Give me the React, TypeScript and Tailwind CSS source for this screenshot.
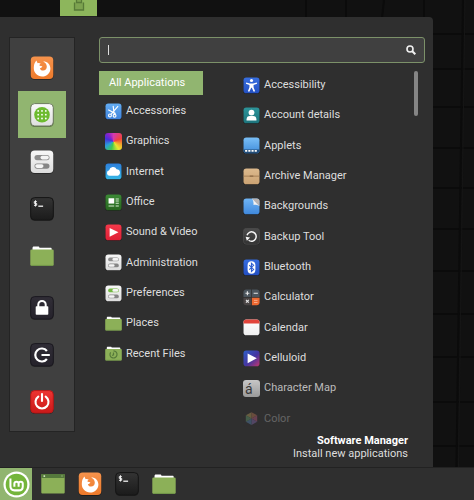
import type { ReactNode } from 'react';

interface IconProps {
  className?: string;
}

interface AppEntry {
  label: string;
  icon: ReactNode;
  className?: string;
}

interface TileProps extends IconProps {
  from: string;
  to: string;
  id: string;
  stroke?: string;
  children?: ReactNode;
}

// Rounded square with a vertical gradient, shared by most of the icons
function Tile({ from, to, id, stroke = 'none', className = 'size-[17px]', children }: TileProps) {
  return (
    <svg className={`shrink-0 ${className}`} viewBox="0 0 24 24" aria-hidden="true">
      <defs>
        <linearGradient id={id} x1="0" y1="0" x2="0" y2="1">
          <stop offset="0" stopColor={from} />
          <stop offset="1" stopColor={to} />
        </linearGradient>
      </defs>
      <rect x="0.2" y="1" width="23.6" height="23" rx="4.5" fill="#000" opacity="0.35" />
      <rect x="0.7" y="0.6" width="22.6" height="22.4" rx="4" fill={`url(#${id})`} stroke={stroke} />
      {children}
    </svg>
  );
}

function FirefoxIcon({ id, className = 'size-6' }: IconProps & { id: string }) {
  return (
    <Tile id={id} from="#f6934c" to="#ee7a2b" className={className}>
      <path
        d="M4 9.500C4.300 7.500 5.200 5.800 6.600 4.500c.1 1.200.5 2 1.200 2.700 1-.2 2 0 2.900.4-.8.5-1.300 1.200-1.300 2 .8.5 1.700.6 2.900.6-.1 1.200-1.200 1.500-2.400 2 .4 1.600 1.700 2.400 3.200 2.300 2.200-.1 3.700-1.700 3.700-3.800 0-2.600-1.500-4-3.600-5.500 4.300.2 7.200 3.200 7.200 7.200 0 4.500-3.700 8.100-8.300 8.100S3.800 16.900 3.800 12.300c0-1 .1-1.900.2-2.800z"
        fill="#fff"
      />
    </Tile>
  );
}

function MenuGridIcon() {
  const steps = [-3.8, 0, 3.8];
  return (
    <Tile id="software" from="#fafafa" to="#dedede" stroke="#6c7b5c" className="size-6">
      <circle cx="12" cy="11.7" r="7.8" fill="#6dbb2f" />
      {steps.map((y) =>
        steps.map((x) => <circle key={`${x}${y}`} cx={12 + x} cy={11.7 + y} r="0.9" fill="#fff" />)
      )}
    </Tile>
  );
}

function TogglesIcon({ id, top = '#8d8d8d', className = 'size-[17px]' }: IconProps & { id: string; top?: string }) {
  return (
    <Tile id={id} from="#f8f8f8" to="#dcdcdc" className={className}>
      <rect x="4.5" y="5" width="15" height="5.2" rx="2.6" fill={top} />
      <rect x="10.5" y="5.8" width="8.3" height="3.6" rx="1.8" fill="#f5f5f5" />
      <rect x="4.5" y="13.5" width="15" height="5.2" rx="2.6" fill="#858585" />
      <rect x="5.2" y="14.3" width="8.3" height="3.6" rx="1.8" fill="#f5f5f5" />
    </Tile>
  );
}

function TerminalIcon({ id }: { id: string }) {
  return (
    <Tile id={id} from="#343434" to="#1b1b1b" stroke="#161616" className="size-6">
      <path d="M6.8 4.600H4.300v1.800h2.400v1.900H4M5.500 3.300v6.200" fill="none" stroke="#f2f2f2" />
      <path d="M8.300 9.200h4.800" stroke="#f2f2f2" strokeWidth="1.3" />
    </Tile>
  );
}

function FolderIcon({ className = 'size-6', recent = false }: IconProps & { recent?: boolean }) {
  return (
    <svg className={`shrink-0 ${className}`} viewBox="0 0 24 24" aria-hidden="true">
      <path d="M2.500 6V4.200c0-1 .5-1.700 1.400-1.700h4.200c.9 0 1.200.5 1.400 1.200h11c.8 0 1.200.5 1.200 1.300v2z" fill="#fff" />
      <rect x="0.3" y="5.5" width="23.4" height="16.3" rx="1.3" fill="#8cb058" />
      <path d="M1 21.400h22" stroke="#73984a" />
      {recent && (
        <g fill="none" stroke="#55793a" strokeWidth="1.7">
          <path d="M8 10.300a5 5 0 1 0 4-2" />
          <path d="M12 10.500v3.300l-2 1" />
        </g>
      )}
    </svg>
  );
}

function WindowIcon() {
  return (
    <svg className="size-6" viewBox="0 0 24 24" aria-hidden="true">
      <rect x="0.3" y="2" width="23.4" height="19.5" rx="1" fill="#8cb058" />
      <path d="M0.300 6V3c0-.6.4-1 1-1h21.400c.6 0 1 .4 1 1v3z" fill="#55793c" />
      <rect x="2.5" y="3.3" width="1.6" height="1.6" fill="#d9e8c7" />
      <path d="M20 4h2" stroke="#86a86a" />
    </svg>
  );
}

function MintLogo() {
  return (
    <svg className="size-[27px]" viewBox="0 0 28 28" aria-hidden="true">
      <circle cx="14" cy="14" r="13.5" fill="#fff" />
      <circle cx="14" cy="14" r="11.2" fill="#74b53b" />
      <path
        d="M7.700 7.800v8.100c0 2.600 1.800 4.200 4.200 4.200h4.400c2.400 0 4.200-1.600 4.200-4.100v-2.700c0-1.300-.9-2.200-2.100-2.200s-2.200.9-2.200 2.200v3M16.200 13.300c0-1.300-.9-2.200-2.200-2.200s-2.200.9-2.200 2.200v3"
        fill="none"
        stroke="#fff"
        strokeWidth="2.1"
      />
    </svg>
  );
}

function LockIcon() {
  return (
    <Tile id="lock" from="#302d36" to="#25222b" stroke="#1b1920" className="size-6">
      <path d="M8.300 11V8.600a3.700 3.700 0 0 1 7.400 0V11" fill="none" stroke="#fff" strokeWidth="2" />
      <rect x="5.7" y="10.3" width="12.6" height="8.4" rx="0.8" fill="#fff" />
    </Tile>
  );
}

function LogoutIcon() {
  return (
    <Tile id="logout" from="#302d36" to="#25222b" stroke="#1b1920" className="size-6">
      <path d="M16.900 8a6.500 6.500 0 1 0 0 8M11.500 12h8.300" fill="none" stroke="#fff" strokeWidth="2.2" />
    </Tile>
  );
}

function PowerIcon() {
  return (
    <Tile id="power" from="#ee3432" to="#c91919" stroke="#b81818" className="size-6">
      <path
        d="M8.300 6.600a6.500 6.500 0 1 0 7.400 0M12 4v7"
        fill="none"
        stroke="#fff"
        strokeWidth="2.1"
        strokeLinecap="round"
      />
    </Tile>
  );
}

const favorites: AppEntry[] = [
  { label: 'Firefox', icon: <FirefoxIcon id="fx-side" /> },
  { label: 'Software Manager', icon: <MenuGridIcon />, className: 'bg-[#91b570]' },
  { label: 'System Settings', icon: <TogglesIcon id="settings" className="size-6" /> },
  { label: 'Terminal', icon: <TerminalIcon id="term-side" /> },
  { label: 'Files', icon: <FolderIcon /> },
];

const session: AppEntry[] = [
  { label: 'Lock Screen', icon: <LockIcon /> },
  { label: 'Logout', icon: <LogoutIcon /> },
  { label: 'Quit', icon: <PowerIcon /> },
];

const categories: AppEntry[] = [
  {
    label: 'Accessories',
    icon: (
      <Tile id="accessories" from="#64adf3" to="#3f83dc">
        <g fill="none" stroke="#fff" strokeWidth="1.6">
          <path d="M4.500 9.500l10.500 5.500M11.500 4l1.500 12M18.500 4.500L8.500 16" />
          <circle cx="7" cy="17.5" r="2" />
          <circle cx="13.5" cy="18" r="2" />
        </g>
      </Tile>
    ),
  },
  {
    label: 'Graphics',
    icon: (
      <span className="size-[17px] shrink-0 rounded-[3px] bg-[conic-gradient(from_0deg,#d43bb0,#f0433c_70deg,#f2a32c_110deg,#e8e82e_145deg,#3fc94e_195deg,#2b9fd8_240deg,#4530d8_290deg,#8a22cc_325deg,#d43bb0)]" />
    ),
  },
  {
    label: 'Internet',
    icon: (
      <Tile id="internet" from="#2e7fdb" to="#35b6e6">
        <path d="M6.500 18a4 4 0 0 1-.6-7.900 5.600 5.600 0 0 1 10.500-1.300 4.700 4.700 0 0 1 1.400 9.200z" fill="#fff" />
      </Tile>
    ),
  },
  {
    label: 'Office',
    icon: (
      <Tile id="office" from="#3c8a36" to="#27661f">
        <rect x="5" y="6" width="8" height="7.5" fill="#fff" />
        <path d="M15 7h4.500M15 10h4.500M15 13h4.500M5 17h8M15 17h4.500" stroke="#d5ecd0" strokeWidth="1.5" />
      </Tile>
    ),
  },
  {
    label: 'Sound & Video',
    icon: (
      <Tile id="sound" from="#f4394a" to="#df2036">
        <path d="M6.500 5.500l12.500 6.300-12.500 6.300z" fill="#fff" />
      </Tile>
    ),
  },
  { label: 'Administration', icon: <TogglesIcon id="administration" /> },
  { label: 'Preferences', icon: <TogglesIcon id="preferences" top="#74b843" /> },
  { label: 'Places', icon: <FolderIcon className="size-[17px]" /> },
  { label: 'Recent Files', icon: <FolderIcon className="size-[17px]" recent /> },
];

const applications: AppEntry[] = [
  {
    label: 'Accessibility',
    icon: (
      <Tile id="accessibility" from="#386fe0" to="#2451c2">
        <circle cx="12" cy="5" r="2.2" fill="#fff" />
        <path
          d="M4.500 7.700l5.200 1.300h4.600l5.200-1.300.4 1.800-5 1.700v3.300l2.200 5.700-2 .7-2.700-5.600h-.8l-2.700 5.600-2-.7 2.200-5.700v-3.300l-5-1.700z"
          fill="#fff"
        />
      </Tile>
    ),
  },
  {
    label: 'Account details',
    icon: (
      <Tile id="account" from="#2d959a" to="#1d747c">
        <circle cx="12" cy="7.9" r="4.1" fill="#fff" />
        <path d="M5 19v-1.500c0-3 2-4.700 4.500-4.700h5c2.500 0 4.500 1.700 4.500 4.700V19z" fill="#fff" />
      </Tile>
    ),
  },
  {
    label: 'Applets',
    icon: (
      <Tile id="applets" from="#7abff7" to="#3e8bda">
        <path d="M.7 17.500h22.600V19a4 4 0 0 1-4 4H4.700a4 4 0 0 1-4-4z" fill="#234e7a" />
        <path d="M3 19.500h18" stroke="#fff" strokeWidth="2.6" strokeDasharray="3 1.5" />
      </Tile>
    ),
  },
  {
    label: 'Archive Manager',
    icon: (
      <Tile id="archive" from="#dcb98d" to="#cba373">
        <path d="M1 11.500h22" stroke="#a68056" strokeWidth="1.4" />
        <path d="M9.500 11.500h5" stroke="#8e6b46" strokeWidth="1.8" />
      </Tile>
    ),
  },
  {
    label: 'Backgrounds',
    icon: (
      <Tile id="backgrounds" from="#70b5f5" to="#3f88dc">
        <path d="M12.500.6h6.800a4 4 0 0 1 4 4v7.200z" fill="#b9b3b1" />
        <path d="M12.500.6l10.800 11.200c-3-1.800-5.500-2.400-8.500-2 .5-3-.2-6.200-2.300-9.200z" fill="#f7f3f1" />
      </Tile>
    ),
  },
  {
    label: 'Backup Tool',
    icon: (
      <Tile id="backup" from="#4b4b4b" to="#333333" stroke="#515151">
        <path d="M8 17.300a6.600 6.600 0 1 0-2.300-7" fill="none" stroke="#f5f5f5" strokeWidth="2.1" />
        <path d="M3.700 12.500l6.300 1-4.500 4.500z" fill="#f5f5f5" />
      </Tile>
    ),
  },
  {
    label: 'Bluetooth',
    icon: (
      <Tile id="bluetooth" from="#366de0" to="#234fc2">
        <rect x="6.5" y="3" width="11" height="17.8" rx="5.5" fill="#fff" />
        <path d="M8.800 8.700l6.200 6-3.100 3V5.900l3.100 3-6.200 6" fill="none" stroke="#2c5dd0" strokeWidth="1.5" />
      </Tile>
    ),
  },
  {
    label: 'Calculator',
    icon: (
      <svg className="size-[17px] shrink-0" viewBox="0 0 24 24" aria-hidden="true">
        <path d="M4.500.6h7v10.700H.6V4.600c0-2.200 1.700-4 3.900-4z" fill="#4b555d" />
        <path d="M12.500.6h7c2.200 0 3.900 1.800 3.900 4v6.700H12.500z" fill="#4b555d" />
        <path d="M.6 12.300h10.900V23h-7a3.900 3.900 0 0 1-3.900-3.900z" fill="#4a4545" />
        <path d="M12.500 12.300h10.900v6.800c0 2.200-1.700 3.900-3.900 3.900h-7z" fill="#ed6931" />
        <path
          d="M3.500 6h5.500M6.200 3.300v5.500M15 6h6M4.200 15.300l4 4M8.200 15.300l-4 4"
          stroke="#e8e8e8"
          strokeWidth="1.6"
        />
        <path d="M15.500 16h5M15.500 19h5" stroke="#f8b695" strokeWidth="1.3" />
      </svg>
    ),
  },
  {
    label: 'Calendar',
    icon: (
      <Tile id="calendar" from="#ffffff" to="#efefef">
        <path d="M.7 6.500V4.600a4 4 0 0 1 4-4h14.600a4 4 0 0 1 4 4v1.900z" fill="#e2443b" />
      </Tile>
    ),
  },
  {
    label: 'Celluloid',
    icon: (
      <svg className="size-[17px] shrink-0" viewBox="0 0 24 24" aria-hidden="true">
        <defs>
          <linearGradient id="celluloid" x1="0" y1="0" x2="1" y2="1">
            <stop offset="0" stopColor="#2f60c8" />
            <stop offset="0.55" stopColor="#4435a0" />
            <stop offset="1" stopColor="#c3366f" />
          </linearGradient>
        </defs>
        <rect x="0.7" y="0.6" width="22.6" height="22.4" rx="4" fill="url(#celluloid)" />
        <path d="M6.500 5l13 6.800-13 6.800z" fill="#fff" />
      </svg>
    ),
  },
  {
    label: 'Character Map',
    className: 'opacity-80',
    icon: (
      <span className="flex size-[17px] shrink-0 items-end rounded-[3px] bg-linear-to-b from-[#ededed] to-[#b5b5b5] pl-0.5 text-sm leading-4 text-[#3b3b3b]">
        á
      </span>
    ),
  },
  {
    label: 'Color',
    className: 'opacity-30',
    icon: (
      <svg className="size-[17px] shrink-0" viewBox="0 0 24 24" aria-hidden="true">
        <rect x="0.7" y="0.6" width="22.6" height="22.4" rx="4" fill="#302c32" />
        <path d="M12 3v9L4 7.500z" fill="#e8c86a" />
        <path d="M12 3v9l8-4.500z" fill="#f0905f" />
        <path d="M20 7.500v9L12 12z" fill="#ee6a9e" />
        <path d="M20 16.500L12 21v-9z" fill="#a57be0" />
        <path d="M12 21l-8-4.500 8-4.500z" fill="#639fe0" />
        <path d="M4 16.500v-9l8 4.500z" fill="#7ac487" />
      </svg>
    ),
  },
];

const taskbar: AppEntry[] = [
  { label: 'Show Desktop', icon: <WindowIcon /> },
  { label: 'Firefox', icon: <FirefoxIcon id="fx-bar" /> },
  { label: 'Terminal', icon: <TerminalIcon id="term-bar" /> },
  { label: 'Files', icon: <FolderIcon /> },
];

// Stone block wallpaper
function Wallpaper() {
  const seams = [34, 69, 107, 148, 188, 229, 271, 314, 357, 402, 446];
  return (
    <svg
      className="absolute inset-0 h-full w-full"
      viewBox="0 0 474 500"
      preserveAspectRatio="xMaxYMin slice"
      aria-hidden="true"
    >
      <rect width="474" height="500" fill="#111" />
      <g stroke="#0b0b0b" strokeWidth="2">
        {seams.map((y) => (
          <path key={y} d={`M424 ${y}h50`} />
        ))}
        <path d="M463 0L456 500M306 0v18M346 0v18M384 0l-2 18M424 0v18" />
      </g>
      <path d="M465 0L458 500" stroke="#161616" />
    </svg>
  );
}

function SideButton({ item }: { item: AppEntry }) {
  return (
    <button
      type="button"
      aria-label={item.label}
      className={`flex h-[47px] w-12 items-center justify-center ${item.className ?? ''}`}
    >
      {item.icon}
    </button>
  );
}

function EntryList({ items, className }: { items: AppEntry[]; className: string }) {
  return (
    <ul className={`grid auto-rows-fr ${className}`}>
      {items.map((item) => (
        <li key={item.label} className={`flex ${item.className ?? ''}`}>
          <button type="button" className="flex flex-1 items-center gap-1 text-left whitespace-nowrap">
            {item.icon}
            {item.label}
          </button>
        </li>
      ))}
    </ul>
  );
}

export default function App() {
  return (
    <div className="relative flex min-h-screen flex-col bg-[#111] font-[Roboto,'Noto_Sans',sans-serif] text-[11px] text-[#dedede]">
      <Wallpaper />

      <div className="relative ml-[60px] flex h-[17px] w-[37px] items-start justify-center border-b border-[#222] bg-[#8db65c]">
        <svg className="h-[11px] w-3" viewBox="0 0 12 11" aria-hidden="true">
          <path d="M1.500 2.500v7.500h9V2.500M3.500 0v2.500h5V0" fill="#7da350" stroke="#577a37" strokeWidth="1.3" />
        </svg>
      </div>

      {/* Application menu */}
      <main className="relative mr-[41px] flex flex-1 gap-6 rounded-tr-sm bg-[#2f2f2f] pt-5 pr-2 pl-[9px]">
        <nav className="mb-[35px] flex flex-col justify-between border border-[#242424] bg-[#404040] px-2 py-1.5">
          <div>
            {favorites.map((item) => (
              <SideButton key={item.label} item={item} />
            ))}
          </div>
          <div>
            {session.map((item) => (
              <SideButton key={item.label} item={item} />
            ))}
          </div>
        </nav>

        <section className="flex min-w-0 flex-1 flex-col">
          <label className="flex h-[26px] items-center rounded-[3px] border border-[#7c9169] bg-[#404040] px-2">
            <span className="h-2.5 w-px bg-[#dedede]" />
            <input
              type="text"
              aria-label="Search"
              className="min-w-0 flex-1 bg-transparent text-[11px] caret-[#dedede] outline-none"
            />
            <svg className="size-2.5" viewBox="0 0 10 10" aria-hidden="true">
              <circle cx="4" cy="4" r="3" fill="none" stroke="#f0f0f0" strokeWidth="1.6" />
              <path d="M6.300 6.300L9.300 9.300" stroke="#f0f0f0" strokeWidth="2" />
            </svg>
          </label>

          <div className="flex pt-[7px]">
            <div className="w-[104px] shrink-0">
              <button type="button" className="mt-px mb-px block h-6 w-full bg-[#91b570] pl-2.5 text-left text-white">
                All Applications
              </button>
              <EntryList items={categories} className="h-[273px] pl-1.5" />
            </div>
            <EntryList items={applications} className="ml-10 h-[364px] flex-1" />
            <div className="mt-px mr-[7px] h-[45px] w-1 rounded-full bg-[#858585]" />
          </div>

          <p className="pr-[17px] text-right leading-[13px]">
            <strong className="block text-white">Software Manager</strong>
            Install new applications
          </p>
        </section>
      </main>

      {/* Panel */}
      <footer className="relative flex h-[33px] items-stretch border-t border-[#222] bg-[#2f2f2f]">
        <button type="button" aria-label="Menu" className="flex w-8 items-center justify-center bg-[#91b570]">
          <MintLogo />
        </button>
        <div className="flex items-center pl-0.5">
          {taskbar.map((item) => (
            <button key={item.label} type="button" aria-label={item.label} className="flex w-[37px] justify-center">
              {item.icon}
            </button>
          ))}
        </div>
      </footer>
    </div>
  );
}
